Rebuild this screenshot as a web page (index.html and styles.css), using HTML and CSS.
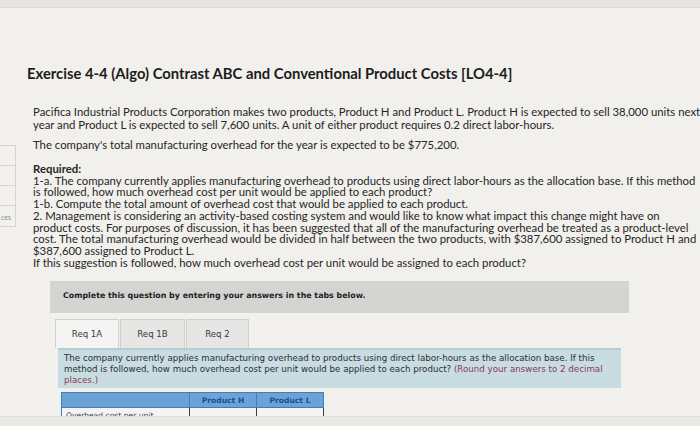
FILE: index.html
```html
<!DOCTYPE html>
<html>
<head>
<meta charset="utf-8">
<link rel="stylesheet" href="styles.css">
</head>
<body>
<div class="topbar"></div>
<div class="layout">
  <aside class="sidebar">
    <div class="side-cell"></div>
    <div class="side-cell"></div>
    <div class="side-cell"></div>
    <div class="side-cell last">ces</div>
  </aside>
  <main class="main">
    <h1 class="title">Exercise 4-4 (Algo) Contrast ABC and Conventional Product Costs [LO4-4]</h1>
    <div class="body-text">
      <p class="para">Pacifica Industrial Products Corporation makes two products, Product H and Product L. Product H is expected to sell 38,000 units next<br>year and Product L is expected to sell 7,600 units. A unit of either product requires 0.2 direct labor-hours.</p>
      <p class="para">The company's total manufacturing overhead for the year is expected to be $775,200.</p>
      <p class="para req"><b>Required:</b><br>1-a. The company currently applies manufacturing overhead to products using direct labor-hours as the allocation base. If this method<br>is followed, how much overhead cost per unit would be applied to each product?<br>1-b. Compute the total amount of overhead cost that would be applied to each product.<br>2. Management is considering an activity-based costing system and would like to know what impact this change might have on<br>product costs. For purposes of discussion, it has been suggested that all of the manufacturing overhead be treated as a product-level<br>cost. The total manufacturing overhead would be divided in half between the two products, with $387,600 assigned to Product H and<br>$387,600 assigned to Product L.<br>If this suggestion is followed, how much overhead cost per unit would be assigned to each product?</p>
    </div>
    <section class="question">
      <div class="instr">Complete this question by entering your answers in the tabs below.</div>
      <div class="tabs">
        <div class="tab active">Req 1A</div>
        <div class="tab">Req 1B</div>
        <div class="tab">Req 2</div>
      </div>
      <div class="info">The company currently applies manufacturing overhead to products using direct labor-hours as the allocation base. If this<br>method is followed, how much overhead cost per unit would be applied to each product? <span class="note">(Round your answers to 2 decimal<br>places.)</span></div>
      <table class="grid">
        <tr class="head"><th class="blank"></th><th>Product H</th><th>Product L</th></tr>
        <tr class="row"><td class="lbl">Overhead cost per unit</td><td class="inp"></td><td class="inp"></td></tr>
      </table>
    </section>
  </main>
</div>
<div class="bottombar"></div>
</body>
</html>
```
FILE: styles.css
```css
html, body {
  margin: 0;
  padding: 0;
}
body {
  width: 700px;
  height: 426px;
  overflow: hidden;
  background: #f1f0ec;
  font-family: Lato, "Open Sans", sans-serif;
  color: #262626;
  position: relative;
}
.topbar {
  height: 7px;
  background: #e5e4e0;
  border-bottom: 1px solid #dcdbd7;
}
.layout {
  display: flex;
}
.sidebar {
  width: 16px;
  flex: none;
  padding-top: 137px;
}
.side-cell {
  height: 19px;
  border: 1px solid #d6d5d1;
  border-left: none;
  border-bottom: none;
  background: #f2f1ed;
}
.side-cell.last {
  height: 20px;
  border-bottom: 1px solid #d6d5d1;
  font-size: 7px;
  color: #8a8a8a;
  line-height: 22px;
  overflow: hidden;
  text-indent: 1px;
}
.main {
  flex: 1;
  padding-left: 11px;
  min-width: 0;
}
.title {
  margin: 56px 0 0 0;
  font-size: 14.8px;
  font-weight: 700;
  color: #1c1c1c;
  line-height: 19px;
  white-space: nowrap;
}
.body-text {
  padding-left: 6px;
  margin-top: 22px;
  font-size: 11.35px;
  line-height: 13px;
}
.para {
  margin: 0 0 7px 0;
  white-space: nowrap;
}
.req {
  margin-top: 12px;
  line-height: 11.7px;
}
.question {
  margin-top: 13px;
  margin-left: 23px;
  width: 579px;
  font-family: "DejaVu Sans", Verdana, sans-serif;
}
.instr {
  background: #d4d4d2;
  height: 32px;
  line-height: 30px;
  padding-left: 13px;
  font-size: 7.9px;
  font-weight: 700;
  color: #1e1e1e;
  white-space: nowrap;
}
.tabs {
  display: flex;
  margin-top: 6px;
  margin-left: 5px;
  gap: 1px;
}
.tab {
  height: 28px;
  line-height: 28px;
  border: 1px solid #cfcfcd;
  border-bottom: none;
  background: #e6e6e4;
  font-size: 8.6px;
  color: #3a3a3a;
  text-align: center;
}
.tab:nth-child(1) { width: 62px; background: #f4f4f2; }
.tab:nth-child(2) { width: 63px; }
.tab:nth-child(3) { width: 61px; }
.info {
  margin-left: 8px;
  width: 563px;
  background: #c8dce2;
  border-top: 2px solid #b5ccd4;
  padding: 3px 0 3px 6px;
  box-sizing: border-box;
  height: 40px;
  font-size: 8.7px;
  line-height: 11px;
  color: #2b2f33;
  white-space: nowrap;
}
.note {
  color: #8b3a52;
}
.grid {
  margin-top: 4px;
  margin-left: 11px;
  border-collapse: collapse;
  font-size: 7.6px;
}
.grid th {
  background: #6ba3d6;
  color: #1d4f8e;
  height: 14px;
  padding: 0;
  border: 1px solid #3f7fb9;
  font-weight: 700;
}
.grid th.blank { width: 127px; }
.grid th:nth-child(2) { width: 66px; }
.grid th:nth-child(3) { width: 66px; }
.grid td {
  height: 12px;
  padding: 0;
  background: #f4f4f2;
  vertical-align: top;
}
.grid td.lbl {
  color: #3a4a6a;
  padding: 4px 0 0 4px;
  line-height: 8px;
  border-left: 1px solid #3f7fb9;
}
.grid td.inp {
  border-left: 1px solid #3f3f3f;
}
.grid td.inp:last-child {
  border-right: 1px solid #3f3f3f;
}
.bottombar {
  position: absolute;
  left: 0;
  right: 0;
  bottom: 0;
  height: 9px;
  background: #e9e9e6;
  border-top: 1px solid #e0e0dc;
}
```
